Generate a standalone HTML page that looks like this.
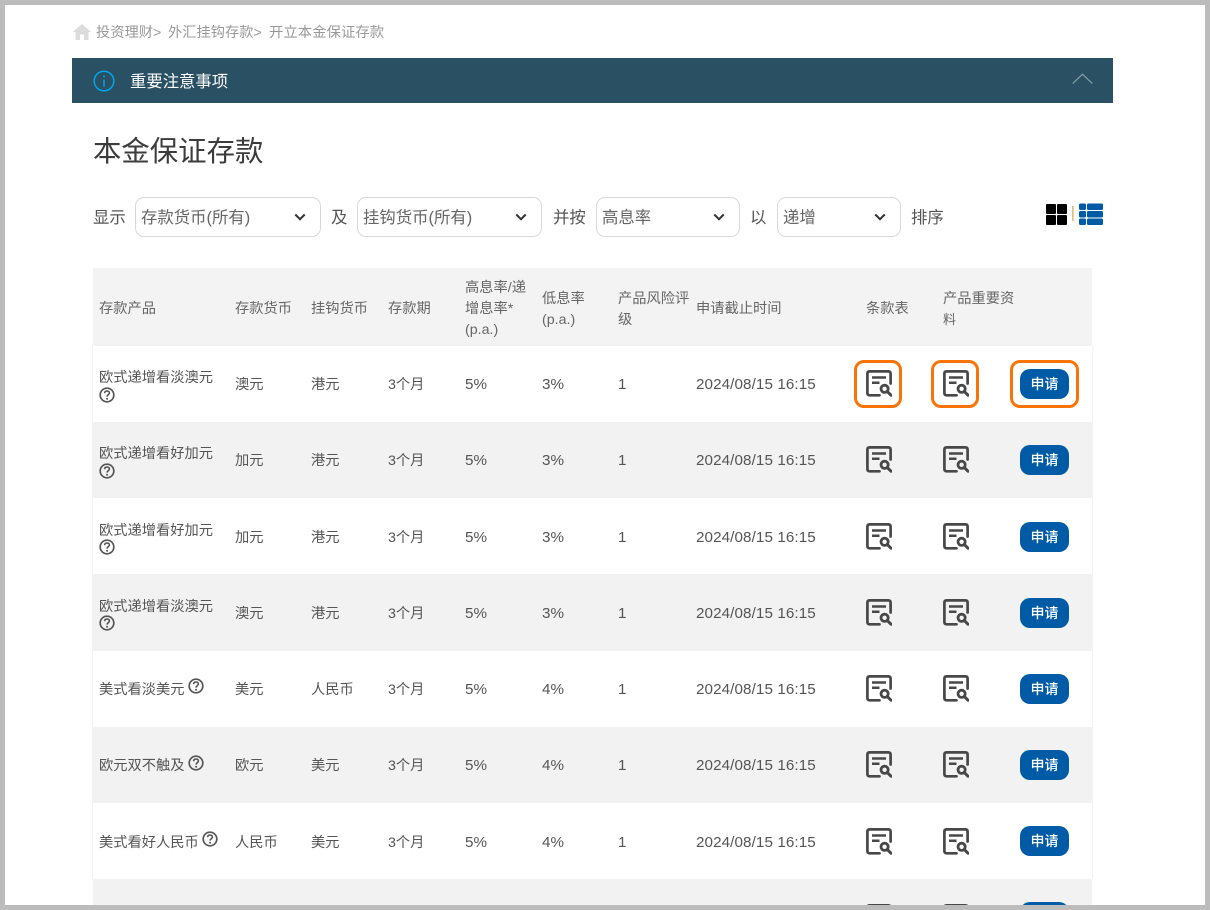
<!DOCTYPE html>
<html lang="zh-CN">
<head>
<meta charset="utf-8">
<title>本金保证存款</title>
<style>
html,body{margin:0;padding:0;background:#fff}
#p{position:relative;width:1210px;height:910px;overflow:hidden;background:#fff;font-family:"Liberation Sans","Noto Sans CJK SC",sans-serif;color:#555}
.b{position:absolute;background:#bcbcbc;z-index:20}
.r{position:absolute;left:93px;width:999px}
.t{position:absolute;line-height:20px;height:20px;white-space:nowrap;font-size:14.25px;color:#555;margin-top:1px}
.d{font-size:15.2px;letter-spacing:.1px}
.h{color:#666}
.sel{position:absolute;top:197px;height:40px;border:1px solid #d9d9d9;border-radius:9px;background:#fff;box-sizing:border-box;width:auto}
.lab{position:absolute;top:207.5px;font-size:16.4px;line-height:20px;color:#555;white-space:nowrap}
.chev{position:absolute;top:213px;width:12px;height:8px}
.btn{position:absolute;left:1020px;width:49px;height:30px;border-radius:10px;background:#005ba6;color:#fff;font-size:14px;font-weight:500;line-height:30px;text-align:center}
.ic{position:absolute;width:26px;height:27px}
.q{position:absolute;width:16px;height:16px}
.hl{position:absolute;top:360px;height:48px;border:3px solid #f97306;border-radius:10px;box-sizing:border-box}
</style>
</head>
<body>
<div id="p">
<svg width="0" height="0" style="position:absolute">
<symbol id="doc" viewBox="0 0 26 27"><path d="M13.5 25.3H3.7Q1.4 25.3 1.4 23V3.6Q1.4 1.4 3.7 1.4H22.3Q24.6 1.4 24.6 3.6V13.5" fill="none" stroke="#484848" stroke-width="2.7" stroke-linecap="round"/><path d="M6 7.5H20M6 12.8H13.5" stroke="#484848" stroke-width="2.5" fill="none"/><circle cx="18.6" cy="18.8" r="3.6" fill="none" stroke="#484848" stroke-width="2.8"/><path d="M21.5 21.7L25 25.2" stroke="#484848" stroke-width="3" stroke-linecap="round"/></symbol>
<symbol id="qm" viewBox="0 0 16 16"><circle cx="8" cy="8" r="6.8" fill="none" stroke="#555" stroke-width="1.7"/><path d="M5.6 6.2C5.7 4.7 6.7 4 8 4C9.4 4 10.4 4.8 10.4 6C10.4 7.6 8.1 7.6 8.1 9.6" fill="none" stroke="#555" stroke-width="1.6"/><circle cx="8.1" cy="11.7" r="1" fill="#555"/></symbol>
<symbol id="cv" viewBox="0 0 12 8"><path d="M1.3 1.5L6 6.2L10.7 1.5" fill="none" stroke="#333" stroke-width="2"/></symbol>
</svg>

<div class="b" style="left:0;top:0;width:1210px;height:5px"></div>
<div class="b" style="left:0;top:905px;width:1210px;height:5px"></div>
<div class="b" style="left:0;top:0;width:5px;height:910px"></div>
<div class="b" style="left:1205px;top:0;width:5px;height:910px"></div>

<svg style="position:absolute;left:73px;top:24px" width="18" height="16" viewBox="0 0 18 16"><path d="M9 0L18 8H15.5V16H11V10.5H7V16H2.5V8H0Z" fill="#dcdcdc"/></svg>
<div class="t" style="left:96px;top:22px;color:#999">投资理财&gt;</div>
<div class="t" style="left:168px;top:22px;color:#999">外汇挂钩存款&gt;</div>
<div class="t" style="left:269px;top:22px;color:#999;font-size:14.4px">开立本金保证存款</div>

<div style="position:absolute;left:72px;top:58px;width:1041px;height:45px;background:#2a5163"></div>
<svg style="position:absolute;left:93px;top:70px" width="22" height="22" viewBox="0 0 22 22"><circle cx="11" cy="11" r="9.8" fill="none" stroke="#00a4ef" stroke-width="1.5"/><path d="M11 9.5V16.5" stroke="#00a4ef" stroke-width="1.5"/><circle cx="11" cy="6.4" r="1" fill="#00a4ef"/></svg>
<div class="t" style="left:130px;top:71.5px;color:#fff;font-size:16.35px;margin-top:0">重要注意事项</div>
<svg style="position:absolute;left:1072px;top:73px" width="21" height="12" viewBox="0 0 21 12"><path d="M.7 10.5L10.5 1.2L20.3 10.5" fill="none" stroke="#8b9ea8" stroke-width="1.2"/></svg>

<div style="position:absolute;left:93px;top:131px;font-size:28.4px;line-height:42px;color:#3c3c3c;white-space:nowrap">本金保证存款</div>

<div class="lab" style="left:93px">显示</div>
<div class="sel" style="left:135px;width:186px"></div>
<div class="lab" style="left:141px;color:#666">存款货币(所有)</div>
<svg class="chev" style="left:294px"><use href="#cv"/></svg>
<div class="lab" style="left:331px">及</div>
<div class="sel" style="left:357px;width:185px"></div>
<div class="lab" style="left:363px;color:#666">挂钩货币(所有)</div>
<svg class="chev" style="left:515px"><use href="#cv"/></svg>
<div class="lab" style="left:553px">并按</div>
<div class="sel" style="left:596px;width:144px"></div>
<div class="lab" style="left:602px;color:#666">高息率</div>
<svg class="chev" style="left:713px"><use href="#cv"/></svg>
<div class="lab" style="left:750px">以</div>
<div class="sel" style="left:777px;width:124px"></div>
<div class="lab" style="left:783px;color:#666">递增</div>
<svg class="chev" style="left:874px"><use href="#cv"/></svg>
<div class="lab" style="left:911px">排序</div>

<svg style="position:absolute;left:1045px;top:203px" width="60" height="24" viewBox="0 0 60 24">
<rect x="1" y="1" width="10" height="10" rx="1" fill="#000"/><rect x="12" y="1" width="10" height="10" rx="1" fill="#000"/><rect x="1" y="12" width="10" height="10" rx="1" fill="#000"/><rect x="12" y="12" width="10" height="10" rx="1" fill="#000"/>
<rect x="27.3" y="3" width="1.2" height="15" fill="#d9a050"/>
<rect x="34" y=".5" width="7" height="6.5" rx="1.5" fill="#005ba6"/><rect x="42" y=".5" width="16" height="6.5" rx="1.5" fill="#005ba6"/>
<rect x="34" y="8" width="7" height="6.5" rx="1.5" fill="#005ba6"/><rect x="42" y="8" width="16" height="6.5" rx="1.5" fill="#005ba6"/>
<rect x="34" y="15.5" width="7" height="6.5" rx="1.5" fill="#005ba6"/><rect x="42" y="15.5" width="16" height="6.5" rx="1.5" fill="#005ba6"/>
</svg>

<!-- table backgrounds -->
<div class="r" style="top:268px;height:78px;background:#f3f3f3"></div>
<div class="r" style="top:422px;height:76px;background:#f2f2f2"></div>
<div class="r" style="top:574px;height:77px;background:#f2f2f2"></div>
<div class="r" style="top:727px;height:76px;background:#f2f2f2"></div>
<div class="r" style="top:879px;height:26px;background:#f2f2f2"></div>
<div style="position:absolute;left:92px;top:346px;width:1px;height:533px;background:#f3f3f3"></div>
<div style="position:absolute;left:1092px;top:346px;width:1px;height:533px;background:#f3f3f3"></div>

<!-- header -->
<div class="t h" style="left:99px;top:298px">存款产品</div>
<div class="t h" style="left:235px;top:298px">存款货币</div>
<div class="t h" style="left:311px;top:298px">挂钩货币</div>
<div class="t h" style="left:388px;top:298px">存款期</div>
<div class="t h" style="left:465px;top:277px">高息率/递</div>
<div class="t h" style="left:465px;top:298px">增息率*</div>
<div class="t h" style="left:465px;top:319px">(p.a.)</div>
<div class="t h" style="left:542px;top:288px">低息率</div>
<div class="t h" style="left:542px;top:309px">(p.a.)</div>
<div class="t h" style="left:618px;top:288px">产品风险评</div>
<div class="t h" style="left:618px;top:309px">级</div>
<div class="t h" style="left:696px;top:298px">申请截止时间</div>
<div class="t h" style="left:866px;top:298px">条款表</div>
<div class="t h" style="left:943px;top:288px">产品重要资</div>
<div class="t h" style="left:943px;top:309px;font-size:13px">料</div>

<!-- row 1 -->
<div class="t" style="left:99px;top:367px">欧式递增看淡澳元</div>
<svg class="q" style="left:99px;top:387px"><use href="#qm"/></svg>
<div class="t" style="left:235px;top:374px">澳元</div><div class="t" style="left:311px;top:374px">港元</div><div class="t" style="left:388px;top:374px">3个月</div><div class="t d" style="left:465px;top:374px">5%</div><div class="t d" style="left:542px;top:374px">3%</div><div class="t d" style="left:618px;top:374px">1</div><div class="t d" style="left:696px;top:374px">2024/08/15 16:15</div>
<svg class="ic" style="left:866px;top:370px"><use href="#doc"/></svg><svg class="ic" style="left:943px;top:370px"><use href="#doc"/></svg><div class="btn" style="top:369px">申请</div>
<div class="hl" style="left:854px;width:48px"></div><div class="hl" style="left:931px;width:48px"></div><div class="hl" style="left:1010px;width:69px"></div>

<!-- row 2 -->
<div class="t" style="left:99px;top:443px">欧式递增看好加元</div>
<svg class="q" style="left:99px;top:463px"><use href="#qm"/></svg>
<div class="t" style="left:235px;top:450px">加元</div><div class="t" style="left:311px;top:450px">港元</div><div class="t" style="left:388px;top:450px">3个月</div><div class="t d" style="left:465px;top:450px">5%</div><div class="t d" style="left:542px;top:450px">3%</div><div class="t d" style="left:618px;top:450px">1</div><div class="t d" style="left:696px;top:450px">2024/08/15 16:15</div>
<svg class="ic" style="left:866px;top:446px"><use href="#doc"/></svg><svg class="ic" style="left:943px;top:446px"><use href="#doc"/></svg><div class="btn" style="top:445px">申请</div>

<!-- row 3 -->
<div class="t" style="left:99px;top:520px">欧式递增看好加元</div>
<svg class="q" style="left:99px;top:539px"><use href="#qm"/></svg>
<div class="t" style="left:235px;top:527px">加元</div><div class="t" style="left:311px;top:527px">港元</div><div class="t" style="left:388px;top:527px">3个月</div><div class="t d" style="left:465px;top:527px">5%</div><div class="t d" style="left:542px;top:527px">3%</div><div class="t d" style="left:618px;top:527px">1</div><div class="t d" style="left:696px;top:527px">2024/08/15 16:15</div>
<svg class="ic" style="left:866px;top:523px"><use href="#doc"/></svg><svg class="ic" style="left:943px;top:523px"><use href="#doc"/></svg><div class="btn" style="top:522px">申请</div>

<!-- row 4 -->
<div class="t" style="left:99px;top:596px">欧式递增看淡澳元</div>
<svg class="q" style="left:99px;top:615px"><use href="#qm"/></svg>
<div class="t" style="left:235px;top:603px">澳元</div><div class="t" style="left:311px;top:603px">港元</div><div class="t" style="left:388px;top:603px">3个月</div><div class="t d" style="left:465px;top:603px">5%</div><div class="t d" style="left:542px;top:603px">3%</div><div class="t d" style="left:618px;top:603px">1</div><div class="t d" style="left:696px;top:603px">2024/08/15 16:15</div>
<svg class="ic" style="left:866px;top:599px"><use href="#doc"/></svg><svg class="ic" style="left:943px;top:599px"><use href="#doc"/></svg><div class="btn" style="top:598px">申请</div>

<!-- row 5 -->
<div class="t" style="left:99px;top:679px">美式看淡美元</div>
<svg class="q" style="left:188px;top:678px"><use href="#qm"/></svg>
<div class="t" style="left:235px;top:679px">美元</div><div class="t" style="left:311px;top:679px">人民币</div><div class="t" style="left:388px;top:679px">3个月</div><div class="t d" style="left:465px;top:679px">5%</div><div class="t d" style="left:542px;top:679px">4%</div><div class="t d" style="left:618px;top:679px">1</div><div class="t d" style="left:696px;top:679px">2024/08/15 16:15</div>
<svg class="ic" style="left:866px;top:675px"><use href="#doc"/></svg><svg class="ic" style="left:943px;top:675px"><use href="#doc"/></svg><div class="btn" style="top:674px">申请</div>

<!-- row 6 -->
<div class="t" style="left:99px;top:755px">欧元双不触及</div>
<svg class="q" style="left:188px;top:755px"><use href="#qm"/></svg>
<div class="t" style="left:235px;top:755px">欧元</div><div class="t" style="left:311px;top:755px">美元</div><div class="t" style="left:388px;top:755px">3个月</div><div class="t d" style="left:465px;top:755px">5%</div><div class="t d" style="left:542px;top:755px">4%</div><div class="t d" style="left:618px;top:755px">1</div><div class="t d" style="left:696px;top:755px">2024/08/15 16:15</div>
<svg class="ic" style="left:866px;top:751px"><use href="#doc"/></svg><svg class="ic" style="left:943px;top:751px"><use href="#doc"/></svg><div class="btn" style="top:750px">申请</div>

<!-- row 7 -->
<div class="t" style="left:99px;top:832px">美式看好人民币</div>
<svg class="q" style="left:202px;top:831px"><use href="#qm"/></svg>
<div class="t" style="left:235px;top:832px">人民币</div><div class="t" style="left:311px;top:832px">美元</div><div class="t" style="left:388px;top:832px">3个月</div><div class="t d" style="left:465px;top:832px">5%</div><div class="t d" style="left:542px;top:832px">4%</div><div class="t d" style="left:618px;top:832px">1</div><div class="t d" style="left:696px;top:832px">2024/08/15 16:15</div>
<svg class="ic" style="left:866px;top:828px"><use href="#doc"/></svg><svg class="ic" style="left:943px;top:828px"><use href="#doc"/></svg><div class="btn" style="top:826px">申请</div>

<!-- row 8 (clipped) -->
<svg class="ic" style="left:866px;top:904px"><use href="#doc"/></svg><svg class="ic" style="left:943px;top:904px"><use href="#doc"/></svg><div class="btn" style="top:902px"></div>
</div>
</body>
</html>
